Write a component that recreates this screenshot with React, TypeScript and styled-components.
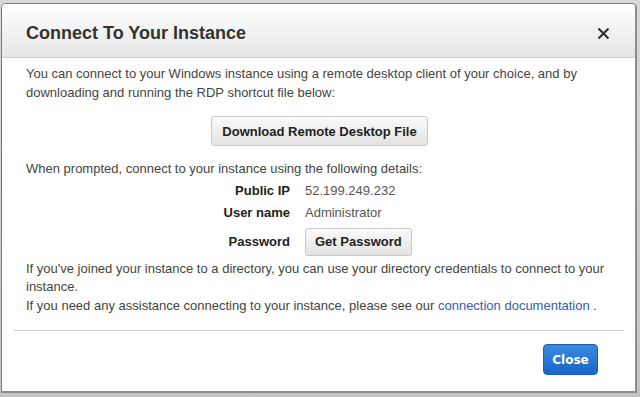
import styled, { createGlobalStyle } from 'styled-components';

const GlobalStyle = createGlobalStyle`
	html, body {
		margin: 0;
		padding: 0;
		background: #bdbdbd;
		font-family: "Liberation Sans", Arial, sans-serif;
	}
`;

const App = () => {
	return (
		<>
			<GlobalStyle />
			<Backdrop>
				<Dialog>
					<Header>
						<Title>Connect To Your Instance</Title>
						<CloseIcon aria-label="close">
							<svg width="13" height="13" viewBox="0 0 13 13">
								<path d="M1.5 1.5 L11.5 11.5 M11.5 1.5 L1.5 11.5" stroke="#333" strokeWidth="2.2" />
							</svg>
						</CloseIcon>
					</Header>
					<Body>
						<Text>
							You can connect to your Windows instance using a remote desktop client of your choice, and by
							downloading and running the RDP shortcut file below:
						</Text>
						<Center>
							<GrayButton $wide>Download Remote Desktop File</GrayButton>
						</Center>
						<Text>When prompted, connect to your instance using the following details:</Text>
						<Details>
							<Label>Public IP</Label>
							<Value>52.199.249.232</Value>
							<Label>User name</Label>
							<Value>Administrator</Value>
							<Label>Password</Label>
							<Value>
								<GrayButton>Get Password</GrayButton>
							</Value>
						</Details>
						<Text>
							If you've joined your instance to a directory, you can use your directory credentials to connect to your
							instance.
						</Text>
						<Text>
							If you need any assistance connecting to your instance, please see our <Link>connection documentation</Link> .
						</Text>
					</Body>
					<Divider />
					<Footer>
						<PrimaryButton>Close</PrimaryButton>
					</Footer>
				</Dialog>
			</Backdrop>
		</>
	);
};

export default App;

const Backdrop = styled.div`
	width: 640px;
	height: 397px;
	padding: 3px 3px 0 1px;
	box-sizing: border-box;
	background: linear-gradient(#d9d9d9, #c4c4c4);
	overflow: hidden;
`;

const Dialog = styled.div`
	width: 636px;
	height: 390px;
	box-sizing: border-box;
	background: #ffffff;
	border: 1px solid #7a7a7a;
	border-right: 2px solid #8d8d8d;
	border-bottom: 2px solid #8d8d8d;
	border-radius: 5px 5px 0 0;
	display: flex;
	flex-direction: column;
	overflow: hidden;
`;

const Header = styled.div`
	height: 54px;
	flex-shrink: 0;
	display: flex;
	align-items: center;
	justify-content: space-between;
	padding: 5px 25px 0 24px;
	box-sizing: border-box;
	background: linear-gradient(#ffffff, #e6e6e6);
	border-bottom: 1px solid #d0d0d0;
`;

const Title = styled.h1`
	margin: 0;
	font-size: 18px;
	font-weight: bold;
	color: #333333;
`;

const CloseIcon = styled.span`
	display: flex;
	align-items: center;
	cursor: pointer;
`;

const Body = styled.div`
	padding: 7px 22px 0 24px;
	display: flex;
	flex-direction: column;
	font-size: 13px;
	line-height: 18.5px;
	color: #444444;
`;

const Text = styled.p`
	margin: 0;
`;

const Center = styled.div`
	display: flex;
	justify-content: center;
	padding: 14px 0 14px;
`;

const GrayButton = styled.button<{ $wide?: boolean }>`
	font-family: inherit;
	font-size: 13px;
	font-weight: bold;
	color: #222222;
	height: ${({ $wide }) => ($wide ? '30px' : '28px')};
	margin: ${({ $wide }) => ($wide ? '0' : '3px 0 4px')};
	padding: 0 ${({ $wide }) => ($wide ? '10px' : '9px')};
	border: 1px solid #c8c8c8;
	border-radius: 3px;
	background: linear-gradient(#fafafa, #e3e3e3);
	cursor: pointer;
`;

const Details = styled.div`
	display: grid;
	grid-template-columns: 264px 1fr;
	grid-auto-rows: minmax(22px, auto);
	column-gap: 15px;
	align-items: center;
	padding: 2px 0 0;
`;

const Label = styled.div`
	text-align: right;
	font-weight: bold;
	color: #222222;
`;

const Value = styled.div`
	color: #555555;
	display: flex;
	align-items: center;
`;

const Link = styled.a`
	color: #3b5ba8;
	cursor: pointer;
`;

const Divider = styled.hr`
	margin: 15px 11px 0 12px;
	border: none;
	border-top: 1px solid #cfcfcf;
`;

const Footer = styled.div`
	display: flex;
	justify-content: flex-end;
	padding: 13px 37px 0 0;
`;

const PrimaryButton = styled.button`
	font-family: "DejaVu Sans", Verdana, sans-serif;
	font-size: 12px;
	font-weight: bold;
	color: #ffffff;
	width: 55px;
	height: 31px;
	border: 1px solid #1b5fb5;
	border-radius: 4px;
	background: linear-gradient(#3a8ae0, #1966c4);
	cursor: pointer;
`;
